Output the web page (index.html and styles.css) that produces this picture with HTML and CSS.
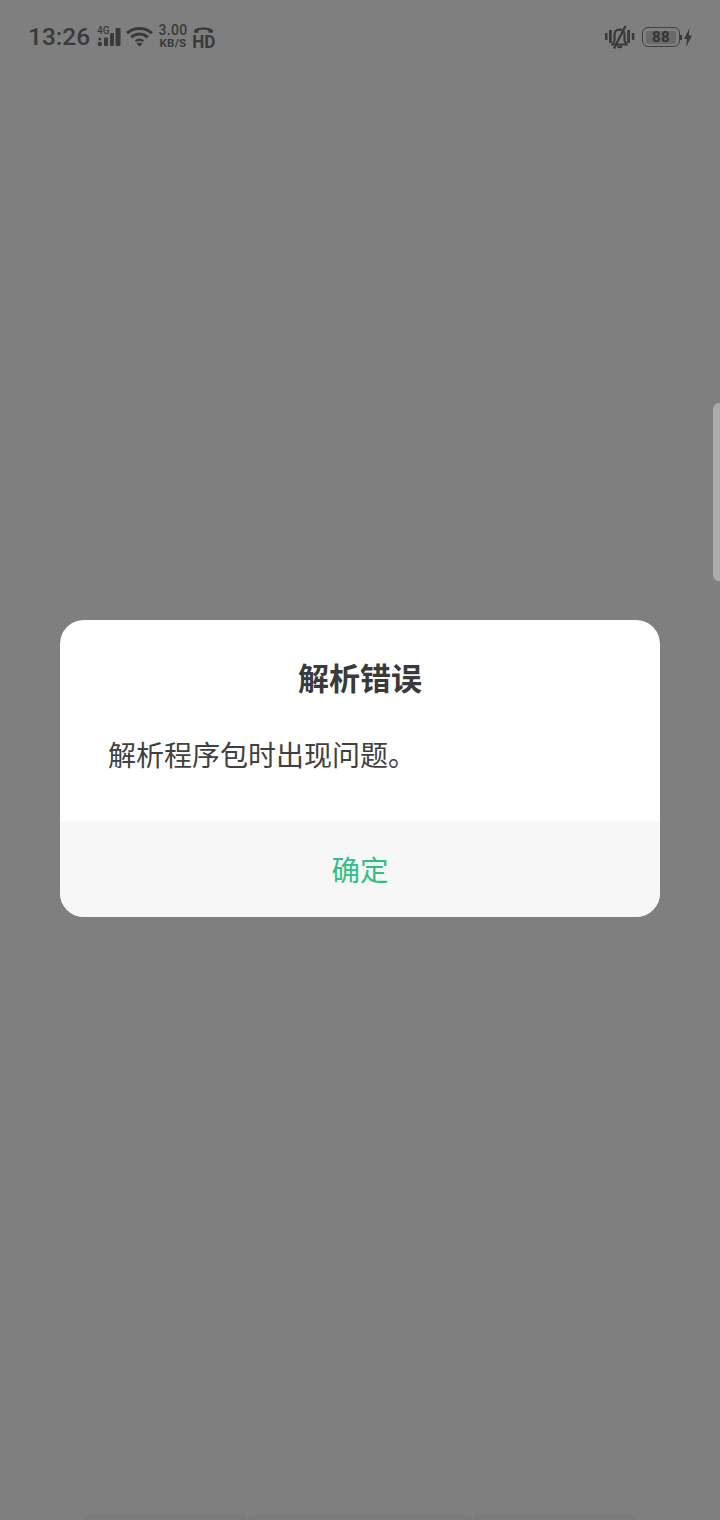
FILE: index.html
```html
<!DOCTYPE html>
<html lang="zh-CN">
<head>
<meta charset="utf-8">
<title>解析错误</title>
<link rel="stylesheet" href="styles.css">
</head>
<body>
<div class="screen">
  <header class="status">
    <div class="status-left">
      <span class="time">13:26</span>
      <span class="net">
        <span class="net-label">4G</span>
        <svg class="signal" width="24" height="20" viewBox="0 0 24 20"><g fill="#3a3a3a"><circle cx="2.800" cy="17" r="2.200"/><circle cx="2.800" cy="12" r="1.500"/><rect x="7" y="10.500" width="4" height="8.500" rx="1"/><rect x="13" y="6" width="4" height="13" rx="1"/><rect x="18.500" y="1" width="5" height="18" rx="1"/></g></svg>
      </span>
      <svg class="wifi" width="27" height="21" viewBox="0 0 27 21"><g fill="none" stroke="#3a3a3a" stroke-width="3"><path d="M1 7.200C8 .8 19 .8 26 7.200"/><path d="M5.200 11.300C10 7 17 7 21.800 11.300"/></g><path d="M8.800 14.200Q13.500 10.800 18.200 14.200L16.600 16Q13.500 14 10.400 16Z" fill="#3a3a3a"/><path d="M10.500 17.400Q13.500 15.800 16.500 17.400L13.500 20.800Z" fill="#3a3a3a"/></svg>
      <span class="speed"><span>3.00</span><span class="speed-unit">KB/S</span></span>
      <span class="hd">
        <svg width="21" height="8" viewBox="0 0 21 8"><path d="M1 6.800V5C1 .2 20 .2 20 5V6.800H15.500V4.500C15.500 3.500 5.500 3.500 5.500 4.500V6.800Z" fill="#3a3a3a"/></svg>
        <span class="hd-label">HD</span>
      </span>
    </div>
    <div class="status-right">
      <svg class="bell" width="31" height="24" viewBox="0 0 31 24"><g fill="#3a3a3a"><rect x="1" y="8" width="2.500" height="7"/><rect x="5" y="5" width="2.800" height="13"/><rect x="23.200" y="5" width="2.800" height="13"/><rect x="27.800" y="8" width="2.500" height="7"/></g><g fill="none" stroke="#3a3a3a" stroke-width="2.200"><path d="M8.500 19.500H22.500L20.500 15.500V9.500C20.500 3 10.500 3 10.500 9.500V15.500Z"/><path d="M13.500 21Q15.700 23.500 18 21"/><path d="M10 23.500L21.500 1"/></g></svg>
      <span class="battery"><span class="battery-fill">88</span></span>
      <span class="battery-tip"></span>
      <svg class="bolt" width="8" height="19" viewBox="0 0 8 19"><path d="M5.500 0L0 11H3L2 19L8 7.500H4.800Z" fill="#3a3a3a"/></svg>
    </div>
  </header>

  <main class="stage">
    <section class="dialog">
      <div class="dialog-body">
        <h1 class="dialog-title">解析错误</h1>
        <p class="dialog-message">解析程序包时出现问题。</p>
      </div>
      <div class="dialog-action">确定</div>
    </section>
  </main>

  <div class="edge-handle"></div>

  <footer class="dock">
    <span class="dock-seg seg-a"></span>
    <span class="dock-seg seg-b"></span>
    <span class="dock-seg seg-c"></span>
  </footer>
</div>
</body>
</html>
```
FILE: styles.css
```css
* { box-sizing: border-box; }
html, body { margin: 0; padding: 0; }
body {
  width: 720px;
  height: 1520px;
  overflow: hidden;
  background: #7f7f7f;
  font-family: Roboto, "Noto Sans CJK SC", sans-serif;
}
.screen {
  position: relative;
  width: 720px;
  height: 1520px;
  display: flex;
  flex-direction: column;
}
.status {
  height: 74px;
  padding: 0 28px;
  display: flex;
  justify-content: space-between;
  align-items: center;
  color: #3a3a3a;
  flex: none;
}
.status-left, .status-right { display: flex; align-items: center; }
.time {
  width: 62px;
  font-size: 24.500px;
  font-weight: 500;
  line-height: 30px;
  color: #3a3a3a;
}
.net {
  position: relative;
  display: block;
  width: 24px;
  height: 20px;
  margin-left: 7px;
}
.net-label {
  position: absolute;
  left: 0;
  top: -2px;
  font-size: 10px;
  line-height: 11px;
  font-weight: 500;
}
.signal { position: absolute; left: 0; top: 0; }
.wifi { margin-left: 5px; margin-top: -1px; }
.speed {
  display: flex;
  flex-direction: column;
  align-items: center;
  margin-left: 6px;
  font-size: 14px;
  line-height: 13px;
  font-weight: 500;
  letter-spacing: 0.300px;
  width: 28px;
}
.speed-unit { font-size: 11.500px; font-weight: 700; letter-spacing: 0.200px; }
.hd {
  display: flex;
  flex-direction: column;
  align-items: center;
  margin-left: 6px;
  width: 21px;
}
.hd svg { display: block; }
.hd-label {
  font-size: 19px;
  line-height: 15px;
  font-weight: 700;
  margin-top: 0;
  transform: scaleX(0.9);
}
.bell { margin-right: 7px; }
.battery {
  width: 38px;
  height: 20px;
  padding: 2.500px 3px;
  border: 1.500px solid #404040;
  border-radius: 6px;
  display: flex;
}
.battery-fill {
  flex: 1;
  background: #6a6a6a;
  border-radius: 3px;
  text-align: center;
  font-size: 15px;
  line-height: 13px;
  font-weight: 700;
  letter-spacing: 0.500px;
  color: #333;
}
.battery-tip {
  width: 2px;
  height: 5px;
  margin: 0 2px 0 0;
  background: #3a3a3a;
}
.stage {
  flex: 1;
  padding: 546px 60px 0;
}
.dialog {
  width: 600px;
  height: 297px;
  border-radius: 24px;
  overflow: hidden;
  background: #fff;
  display: flex;
  flex-direction: column;
}
.dialog-body {
  flex: 1;
  padding: 37px 48px 0;
}
.dialog-title {
  margin: 0;
  text-align: center;
  font-size: 31px;
  line-height: 46px;
  font-weight: 700;
  color: #3a3a3a;
}
.dialog-message {
  margin: 34px 0 0;
  font-size: 28px;
  line-height: 40px;
  font-weight: 400;
  color: #404040;
}
.dialog-action {
  height: 96px;
  flex: none;
  padding-bottom: 2px;
  background: #f7f7f7;
  display: flex;
  align-items: center;
  justify-content: center;
  font-size: 28.500px;
  color: #2fc184;
}
.edge-handle {
  position: absolute;
  right: 0;
  top: 403px;
  width: 7px;
  height: 178px;
  background: #ababab;
  border-radius: 6px 0 0 6px;
}
.dock {
  position: absolute;
  left: 84px;
  right: 84px;
  bottom: 0;
  height: 5px;
  display: flex;
  gap: 2px;
}
.dock-seg { display: block; height: 100%; background: #7b7b7b; border-radius: 2px 2px 0 0; }
.seg-a { width: 162px; }
.seg-b { width: 224px; }
.seg-c { flex: 1; }
```
